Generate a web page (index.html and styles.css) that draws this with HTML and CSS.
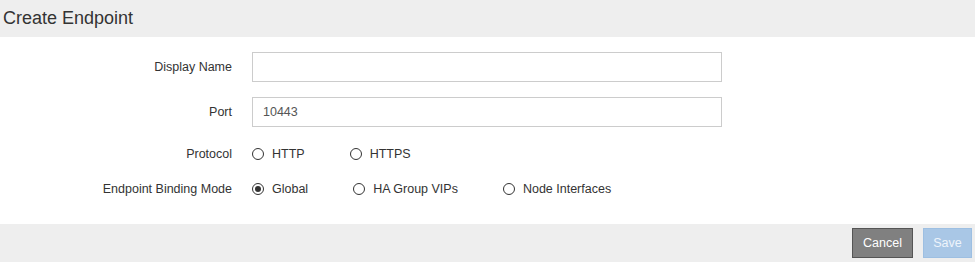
FILE: index.html
```html
<!DOCTYPE html>
<html lang="en">
<head>
  <meta charset="UTF-8">
  <title>Create Endpoint</title>
  <link rel="stylesheet" href="styles.css">
</head>
<body>
  <div class="dialog">
    <div class="dialog-header">
      <h1 class="dialog-title">Create Endpoint</h1>
    </div>

    <div class="dialog-body">
      <div class="form-row">
        <label class="form-label" for="display-name">Display Name</label>
        <input type="text" class="form-control" id="display-name">
      </div>
      <div class="form-row">
        <label class="form-label" for="port">Port</label>
        <input type="text" class="form-control" id="port" value="10443">
      </div>
      <div class="form-row radio-row first-radio-row">
        <span class="form-label">Protocol</span>
        <div class="radio-group">
          <label class="radio"><span class="radio-dot"></span>HTTP</label>
          <label class="radio"><span class="radio-dot"></span>HTTPS</label>
        </div>
      </div>
      <div class="form-row radio-row">
        <span class="form-label">Endpoint Binding Mode</span>
        <div class="radio-group">
          <label class="radio"><span class="radio-dot checked"></span>Global</label>
          <label class="radio"><span class="radio-dot"></span>HA Group VIPs</label>
          <label class="radio"><span class="radio-dot"></span>Node Interfaces</label>
        </div>
      </div>
    </div>

    <div class="dialog-footer">
      <button class="btn btn-cancel">Cancel</button>
      <button class="btn btn-save" disabled>Save</button>
    </div>
  </div>
</body>
</html>
```

FILE: styles.css
```css
:root {
  --text-color: #333;
  --header-bg: #eeeeee;
  --border-color: #cccccc;
}

body {
  margin: 0;
  font-family: 'Liberation Sans', Arial, sans-serif;
  font-size: 12.5px;
  color: var(--text-color);
  background-color: #fff;
}

.dialog-header {
  background-color: var(--header-bg);
  height: 37px;
  padding-left: 3px;
  display: flex;
  align-items: center;
}

.dialog-title {
  margin: 0;
  font-size: 18px;
  font-weight: 400;
  color: var(--text-color);
}

.dialog-body {
  padding: 15px 0 25px;
}

.form-row {
  display: flex;
  align-items: center;
  margin-bottom: 15px;
}

.form-row:last-child {
  margin-bottom: 0;
}

.form-label {
  width: 232px;
  margin-right: 20px;
  text-align: right;
  flex-shrink: 0;
}

.form-control {
  box-sizing: border-box;
  width: 470px;
  height: 30px;
  padding: 0 10px;
  border: 1px solid var(--border-color);
  font-family: inherit;
  font-size: 12.5px;
  color: #555;
  outline: 0;
}

.radio-row {
  height: 20px;
}

.first-radio-row {
  margin-top: 17px;
}

.radio-group {
  display: flex;
  align-items: center;
}

.radio {
  display: flex;
  align-items: center;
  margin-right: 45px;
}

.radio-dot {
  box-sizing: border-box;
  width: 12px;
  height: 12px;
  border: 1px solid #333;
  border-radius: 50%;
  margin-right: 8px;
  display: flex;
  align-items: center;
  justify-content: center;
}

.radio-dot.checked::after {
  content: '';
  width: 6px;
  height: 6px;
  border-radius: 50%;
  background-color: #333;
}

.dialog-footer {
  background-color: var(--header-bg);
  height: 38px;
  display: flex;
  justify-content: flex-end;
  align-items: center;
  padding-right: 3px;
}

.btn {
  box-sizing: border-box;
  height: 30px;
  margin-left: 10px;
  padding: 0;
  font-family: inherit;
  font-size: 12.5px;
  color: #fff;
  border: 1px solid;
}

.btn-cancel {
  width: 61px;
  background-color: #808080;
  border-color: #555;
}

.btn-save {
  width: 49px;
  background-color: #a9c7e6;
  border-color: #9dbfe2;
  color: #eef4fb;
}
```
